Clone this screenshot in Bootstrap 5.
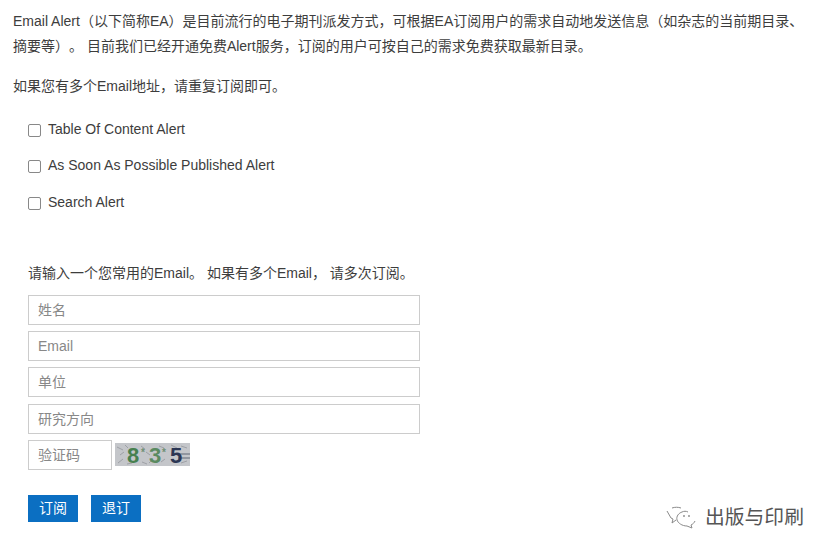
<!DOCTYPE html>
<html lang="zh-CN">
<head>
  <meta charset="UTF-8">
  <title>Email Alert</title>
  <link href="https://cdn.jsdelivr.net/npm/bootstrap@5.3.0/dist/css/bootstrap.min.css" rel="stylesheet">
  <style>
    body {
      background-color: #fff;
      color: #3d3d3d;
      font-family: "Liberation Sans", "Noto Sans CJK SC", sans-serif;
      font-size: 14px;
      line-height: 25px;
      height: 551px;
      overflow: hidden;
      position: relative;
      text-spacing-trim: space-all;
    }
    .page-wrap { padding: 9px 0 0 13px; width: 815px; }
    .intro-text { margin-bottom: 15px; }
    .alert-options { padding: 17.75px 0 0 15px; }
    .alert-option { display: flex; align-items: center; height: 25px; margin-bottom: 11.5px; padding: 0; min-height: 0; }
    .alert-option .form-check-input {
      width: 13px; height: 13px; margin: 2px 7px 0 0; float: none;
      border: 1px solid #888; border-radius: 2px;
    }
    .sub-form { padding: 34.75px 0 0 15px; }
    .sub-note { margin-bottom: 9px; }
    .sub-input {
      display: block; width: 392px; height: 30px; padding: 0 9px;
      font-size: 14px; line-height: 28px;
      border: 1px solid #ccc; border-radius: 0; color: #333;
    }
    .sub-input::placeholder { color: #888; }
    .sub-fields { display: flex; flex-direction: column; gap: 6.2px; }
    .code-input { width: 84px; }
    .captcha-pic { display: block; width: 75px; height: 23px; margin-left: 3px; overflow: visible; }
    .btn-sub {
      width: 50px; height: 27px; padding: 0; border: 0; border-radius: 0;
      background-color: #0b6fc2; color: #fff; font-size: 14px; line-height: 27px;
    }
    .btn-sub:hover { background-color: #0b6fc2; color: #fff; }
    .btn-row { gap: 13px; margin-top: 25px; }
    .wm-mark {
      position: absolute; left: 665px; bottom: 22px;
      display: flex; align-items: center; gap: 8px;
      color: #555; font-size: 19.8px; line-height: 24px;
      text-shadow: 0 0 3px #fff;
    }
  </style>
</head>
<body>
  <div class="page-wrap">
    <p class="intro-text">Email Alert（以下简称EA）是目前流行的电子期刊派发方式，可根据EA订阅用户的需求自动地发送信息（如杂志的当前期目录、摘要等）。 目前我们已经开通免费Alert服务，订阅的用户可按自己的需求免费获取最新目录。</p>
    <p class="mb-0">如果您有多个Email地址，请重复订阅即可。</p>

    <div class="alert-options">
      <label class="alert-option form-check"><input class="form-check-input" type="checkbox">Table Of Content Alert</label>
      <label class="alert-option form-check"><input class="form-check-input" type="checkbox">As Soon As Possible Published Alert</label>
      <label class="alert-option form-check"><input class="form-check-input" type="checkbox">Search Alert</label>
    </div>

    <form class="sub-form">
      <p class="sub-note">请输入一个您常用的Email。 如果有多个Email， 请多次订阅。</p>
      <div class="sub-fields">
        <input class="form-control sub-input" type="text" placeholder="姓名">
        <input class="form-control sub-input" type="text" placeholder="Email">
        <input class="form-control sub-input" type="text" placeholder="单位">
        <input class="form-control sub-input" type="text" placeholder="研究方向">
        <div class="d-flex align-items-center">
          <input class="form-control sub-input code-input" type="text" placeholder="验证码">
          <svg class="captcha-pic" viewBox="0 0 75 23" role="img" aria-label="captcha">
            <rect width="75" height="23" fill="#c4c6ca"/>
            <g stroke="#8f9298" stroke-width="1" opacity=".7">
              <path d="M2 4l6 3M5 12l4-3M3 20l5-4M10 2l3 3M26 3l4 3M27 19l5 2M31 9l4 3M44 3l5 2M46 19l4-3M56 2l6 3M66 3l6 2M66 20l6-2M34 20l3-3M12 21l5-1"/>
            </g>
            <path d="M63 11h12M63 15h12" stroke="#5f6675" stroke-width="1"/>
            <g font-family="'Liberation Sans', sans-serif" font-weight="700" font-size="22">
              <text x="12" y="20" fill="#47804f">8</text>
              <text x="34" y="20" fill="#5a8a60">3</text>
              <text x="55" y="20" fill="#2b3654">5</text>
              <text x="26" y="13" font-size="10" fill="#6f8f72">*</text>
              <text x="47" y="13" font-size="10" fill="#6f8f72">*</text>
            </g>
          </svg>
        </div>
      </div>
      <div class="d-flex btn-row">
        <button class="btn btn-sub" type="button">订阅</button>
        <button class="btn btn-sub" type="button">退订</button>
      </div>
    </form>
  </div>

  <div class="wm-mark">
    <svg width="32" height="24" viewBox="0 0 32 24" fill="none" stroke="#8a8a8a" stroke-width="1">
      <path d="M2 6l4 7 2 1-1 4 4-3"/>
      <path d="M7 3c3-1 6-1 9 0M17 7c-3 1-6 4-5 8 1 3 5 6 10 6l5 2-1-3c2-1 3-2 4-4"/>
      <path d="M17 7c2-1 4-1 6 0"/>
      <circle cx="19" cy="11" r=".6"/><circle cx="24" cy="11" r=".6"/>
    </svg>
    <span>出版与印刷</span>
  </div>

  <script src="https://cdn.jsdelivr.net/npm/bootstrap@5.3.0/dist/js/bootstrap.bundle.min.js"></script>
</body>
</html>
